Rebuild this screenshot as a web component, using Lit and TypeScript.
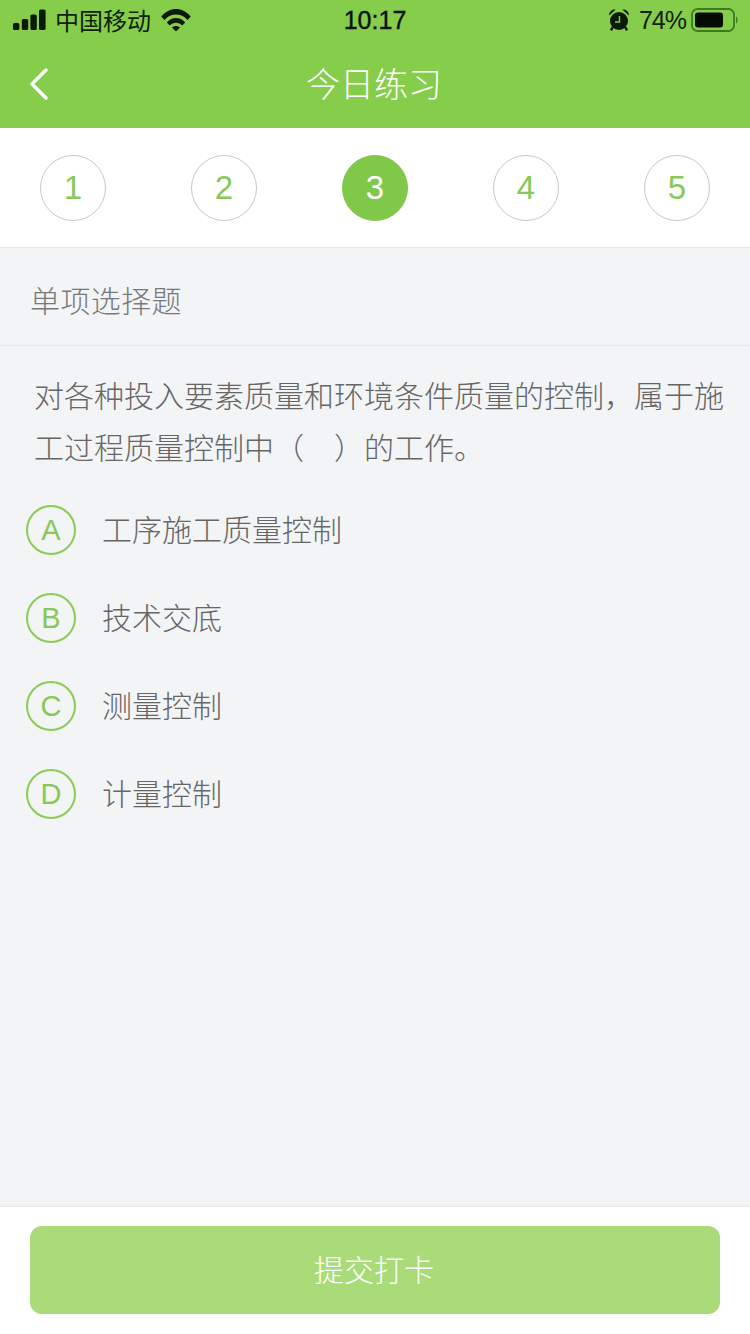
import { LitElement, html, css, svg } from "lit";
import { customElement } from "lit/decorators.js";

const steps = [1, 2, 3, 4, 5];
const options = [
  ["A", "工序施工质量控制"],
  ["B", "技术交底"],
  ["C", "测量控制"],
  ["D", "计量控制"],
];

@customElement("app-root")
export class AppRoot extends LitElement {
  static styles = css`
    :host {
      display: flex;
      flex-direction: column;
      width: 750px;
      height: 1334px;
      overflow: hidden;
      background: #f2f4f6;
      font-family: "Noto Sans CJK SC", "Liberation Sans", sans-serif;
      font-weight: 300;
    }
    .top { background: #86cd4b; height: 128px; flex: none; display: flex; flex-direction: column; }
    .status { height: 40px; display: grid; grid-template-columns: 1fr auto 1fr; align-items: center; color: #0c1a05; }
    .st-left { display: flex; align-items: center; padding-left: 13px; gap: 6px; font-size: 24px; }
    .carrier { line-height: 40px; color: #10220a; font-weight: 400; }
    .wifi { margin-left: 4px; }
    .time { font-family: "Liberation Sans", sans-serif; font-size: 25px; font-weight: 400; color: #08120a; -webkit-text-stroke: 0.4px #08120a; }
    .st-right { display: flex; align-items: center; justify-content: flex-end; padding-right: 11px; gap: 10px; }
    .pct { font-family: "Liberation Sans", sans-serif; font-size: 25px; letter-spacing: -1px; color: #10220a; margin-right: -5px; }
    .nav { flex: 1; display: flex; align-items: center; justify-content: center; position: relative; }
    .back { position: absolute; left: 29px; top: 28px; }
    .title { color: #fff; font-size: 34px; line-height: 44px; padding: 0 2px 2px 0; }
    .steps { background: #fff; flex: none; height: 119px; box-sizing: border-box; padding: 27px 40px 0; display: flex; justify-content: space-between; align-items: flex-start; }
    .step { width: 66px; height: 66px; box-sizing: border-box; border: 1px solid #c8c8c8; border-radius: 50%; display: flex; align-items: center; justify-content: center; color: #86c956; font-family: "Liberation Sans", sans-serif; font-size: 33px; }
    .step.on { background: #80c84a; border-color: #80c84a; color: #fff; }
    .kind { flex: none; height: 99px; box-sizing: border-box; border-top: 1px solid #e8e9ea; border-bottom: 1px solid #e8e9ea; padding: 5px 0 0 30px; display: flex; align-items: center; color: #767a7c; font-size: 30px; letter-spacing: 0.4px; }
    .main { flex: 1; padding: 22px 0 0; }
    .q { margin: 0; padding: 0 26px 0 34px; color: #666; font-size: 30px; line-height: 52px; }
    .opts { display: flex; flex-direction: column; gap: 38px; padding: 33px 0 0 26px; }
    .opt { display: flex; align-items: center; gap: 26px; height: 50px; }
    .letter { width: 50px; height: 50px; box-sizing: border-box; border: 2px solid #88cc55; border-radius: 50%; padding-top: 1px; display: flex; align-items: center; justify-content: center; color: #86c956; font-family: "Liberation Sans", sans-serif; font-size: 29px; }
    .txt { color: #666; font-size: 30px; line-height: 50px; position: relative; top: -2px; }
    .foot { flex: none; height: 128px; box-sizing: border-box; background: #fff; border-top: 1px solid #e6e8ea; padding: 19px 30px 0; }
    .btn { height: 88px; box-sizing: border-box; padding: 0 2px 4px 0; border-radius: 12px; background: #a9dc79; color: #fff; font-size: 30px; display: flex; align-items: center; justify-content: center; }
  `;

  private signal() {
    return svg`<svg width="36" height="22" viewBox="0 0 36 22" fill="#0b1a06">
      <rect x="0" y="14" width="6.4" height="7" rx="1.6"/>
      <rect x="8.8" y="10" width="6.4" height="11" rx="1.6"/>
      <rect x="17.4" y="5.5" width="6.4" height="15.5" rx="1.6"/>
      <rect x="26" y="0.5" width="6.6" height="20.5" rx="1.6"/>
    </svg>`;
  }

  private wifi() {
    return svg`<svg class="wifi" width="30" height="22" viewBox="0 0 30 22" fill="#0b1a06">
      <path d="M0.3 7.6 C8.5 -2.4 21.5 -2.4 29.7 7.6 L26.6 11 C20 3.8 10 3.8 3.4 11 Z"/>
      <path d="M5.8 13.4 C11 7.6 19 7.6 24.2 13.4 L21.2 16.6 C17.6 12.8 12.4 12.8 8.8 16.6 Z"/>
      <path d="M10.9 18.6 C13.3 16.3 16.7 16.3 19.1 18.6 L15 22.4 Z"/>
    </svg>`;
  }

  private alarm() {
    return svg`<svg width="20" height="22" viewBox="0 0 20 22">
      <circle cx="10" cy="12" r="9" fill="#0b1a06"/>
      <path d="M0.2 6.4 A5.4 5.4 0 0 1 6.6 0.6 Z M19.8 6.4 A5.4 5.4 0 0 0 13.4 0.6 Z" fill="#0b1a06"/>
      <path d="M3.8 18 L2 21.4 M16.2 18 L18 21.4" stroke="#0b1a06" stroke-width="2.4"/>
      <path d="M10.5 7 V13 H6" fill="none" stroke="#86cd4b" stroke-width="1.4"/>
    </svg>`;
  }

  private battery() {
    return svg`<svg width="48" height="24" viewBox="0 0 48 24">
      <rect x="1" y="1" width="42" height="22" rx="5.5" fill="none" stroke="#3f7a24" stroke-width="1.8"/>
      <rect x="4" y="4.5" width="28" height="15" rx="3" fill="#050a03"/>
      <path d="M45 8.5 C47 9.5 47 14.5 45 15.5 Z" fill="#3f7a24"/>
    </svg>`;
  }

  render() {
    return html`
      <div class="top">
        <div class="status">
          <div class="st-left">${this.signal()}<span class="carrier">中国移动</span>${this.wifi()}</div>
          <div class="time">10:17</div>
          <div class="st-right">${this.alarm()}<span class="pct">74%</span>${this.battery()}</div>
        </div>
        <div class="nav">
          <svg class="back" width="20" height="32" viewBox="0 0 20 32">
            <path d="M17 2 L3 16 L17 30" fill="none" stroke="#fff" stroke-width="3.4" stroke-linecap="round" stroke-linejoin="round"/>
          </svg>
          <div class="title">今日练习</div>
        </div>
      </div>
      <div class="steps">
        ${steps.map((n) => html`<div class="step ${n === 3 ? "on" : ""}">${n}</div>`)}
      </div>
      <div class="kind">单项选择题</div>
      <div class="main">
        <p class="q">对各种投入要素质量和环境条件质量的控制，属于施工过程质量控制中（　）的工作。</p>
        <div class="opts">
          ${options.map(
            ([l, t]) => html`<div class="opt"><div class="letter">${l}</div><div class="txt">${t}</div></div>`
          )}
        </div>
      </div>
      <div class="foot"><div class="btn">提交打卡</div></div>
    `;
  }
}
